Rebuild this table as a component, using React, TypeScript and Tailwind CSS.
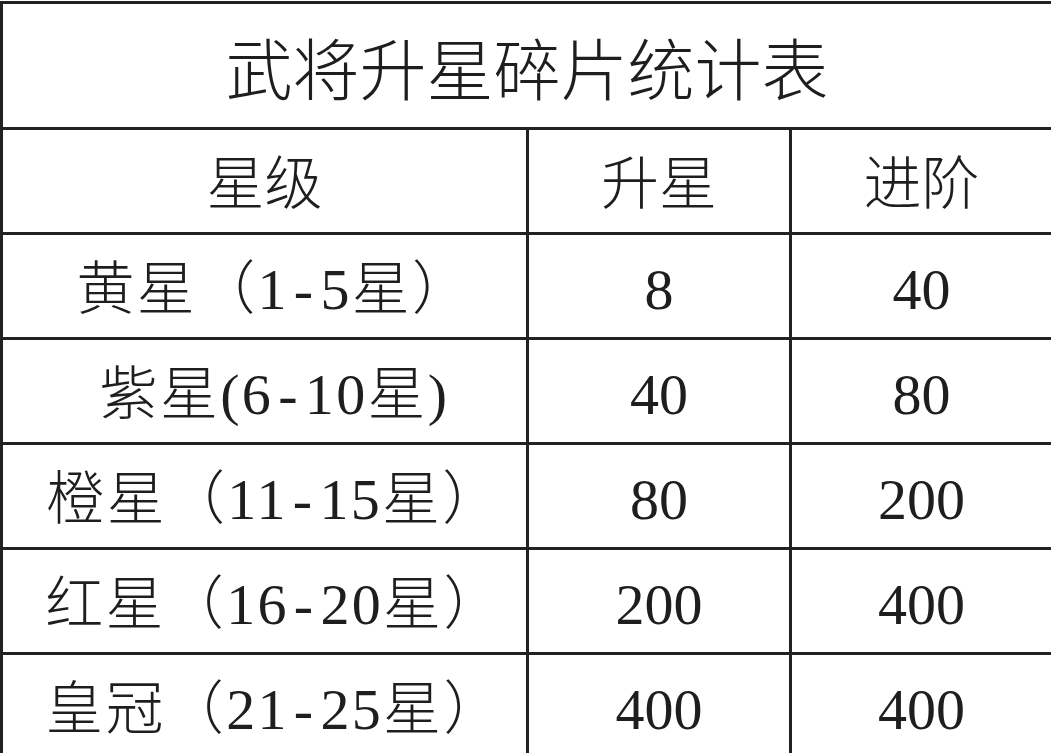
const rows = [
  { star: ['黄星（1', '5星）'], up: '8', adv: '40' },
  { star: ['紫星(6', '10星)'], up: '40', adv: '80' },
  { star: ['橙星（11', '15星）'], up: '80', adv: '200' },
  { star: ['红星（16', '20星）'], up: '200', adv: '400' },
  { star: ['皇冠（21', '25星）'], up: '400', adv: '400' },
];

function Row({ a, b, c, shift }: { a: React.ReactNode; b: string; c: string; shift?: boolean }) {
  return (
    <div className="flex h-[105px] shrink-0 border-t-[3px] border-[#222]">
      <div
        className={
          shift
            ? 'flex w-[523px] items-center justify-center pl-[20px] pt-[8px] tracking-[0.04em]'
            : 'flex w-[523px] items-center justify-center pt-[8px]'
        }
      >
        {a}
      </div>
      <div className="flex w-[263px] items-center justify-center border-l-[3px] border-[#222] pt-[8px]">{b}</div>
      <div className="flex flex-1 items-center justify-center border-l-[3px] border-[#222] pt-[8px]">{c}</div>
    </div>
  );
}

export default function App() {
  return (
    <div
      className="h-[753px] w-[1051px] overflow-hidden bg-white text-[#1e1e1e]"
      style={{ fontFamily: '"Liberation Serif", "Noto Sans CJK SC", serif' }}
    >
      <div className="mt-px flex flex-col border-l-[3px] border-t-[3px] border-[#222] text-[58px] font-light leading-none">
        {/* Title */}
        <div className="flex h-[123px] shrink-0 items-center justify-center pt-[14px] text-[67px]">
          武将升星碎片统计表
        </div>
        <Row a="星级" b="升星" c="进阶" />
        {rows.map((r) => (
          <Row
            key={r.star[0]}
            shift
            a={
              <span>
                {r.star[0]}
                <span className="mx-[5px]">-</span>
                {r.star[1]}
              </span>
            }
            b={r.up}
            c={r.adv}
          />
        ))}
      </div>
    </div>
  );
}
